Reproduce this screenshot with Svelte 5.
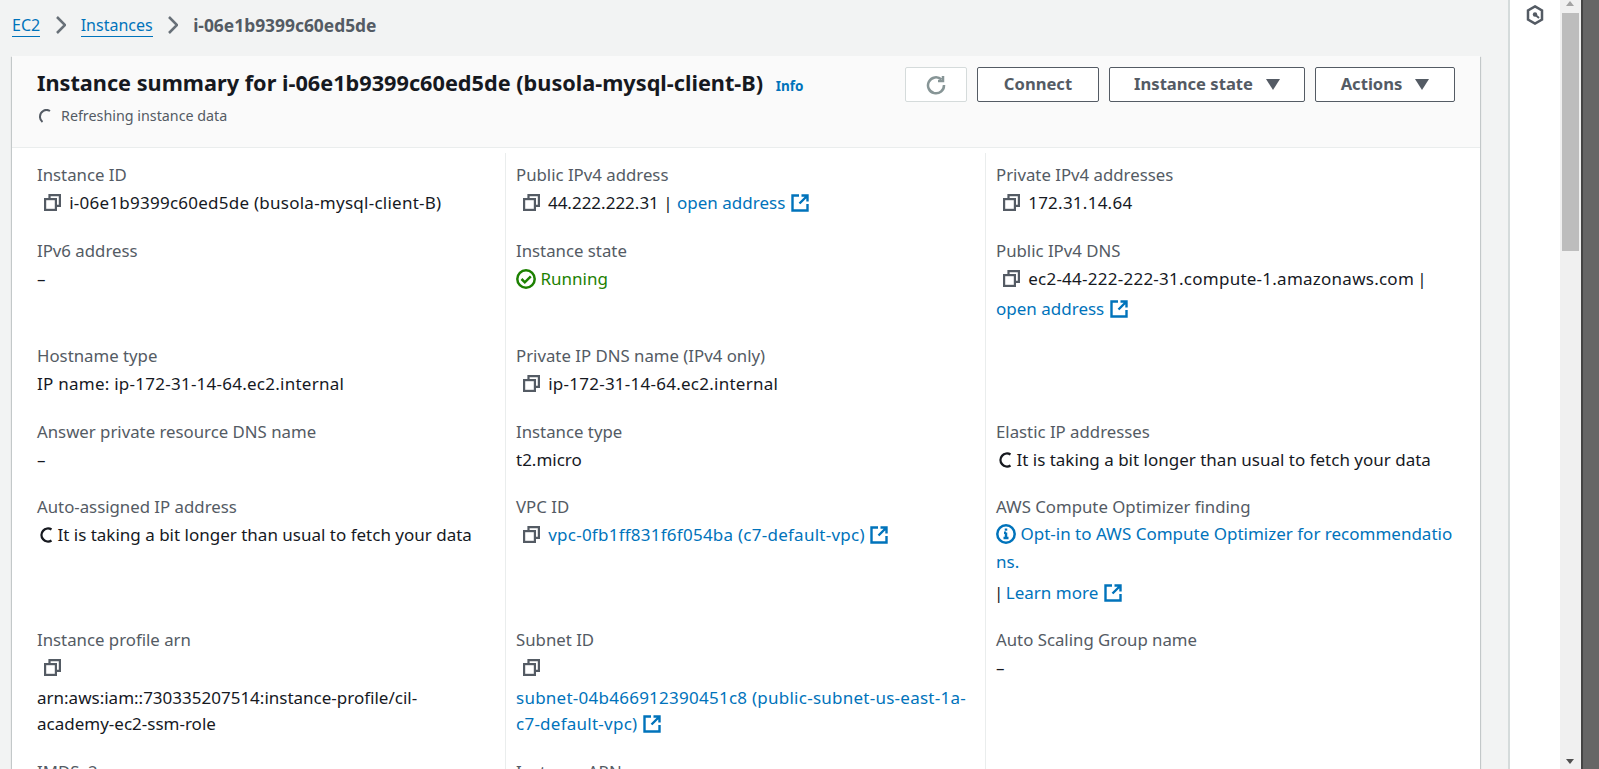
<script>
	const rows = [
		[
			{ label: 'Instance ID', copy: true, text: 'i-06e1b9399c60ed5de (busola-mysql-client-B)' },
			{ label: 'Public IPv4 address', copy: true, plain: true, text: '44.222.222.31 | ', link: 'open address', ext: true },
			{ label: 'Private IPv4 addresses', copy: true, text: '172.31.14.64' }
		],
		[
			{ label: 'IPv6 address', text: '–' },
			{ label: 'Instance state', status: 'Running' },
			{ label: 'Public IPv4 DNS', copy: true, text: 'ec2-44-222-222-31.compute-1.amazonaws.com\u2009| ', link: 'open address', ext: true }
		],
		[
			{ label: 'Hostname type', ids: true, text: 'IP name: ip-172-31-14-64.ec2.internal' },
			{ label: 'Private IP DNS name (IPv4 only)', copy: true, text: 'ip-172-31-14-64.ec2.internal' },
			{ label: '' }
		],
		[
			{ label: 'Answer private resource DNS name', text: '–' },
			{ label: 'Instance type', text: 't2.micro' },
			{ label: 'Elastic IP addresses', spin: true, text: 'It is taking a bit longer than usual to fetch your data' }
		],
		[
			{ label: 'Auto-assigned IP address', spin: true, text: 'It is taking a bit longer than usual to fetch your data' },
			{ label: 'VPC ID', copy: true, link: 'vpc-0fb1ff831f6f054ba (c7-default-vpc)', ext: true },
			{ label: 'AWS Compute Optimizer finding', optimizer: true }
		],
		[
			{ label: 'Instance profile arn', copyBlock: true, text: 'arn:aws:iam::730335207514:instance-profile/cil-academy-ec2-ssm-role' },
			{ label: 'Subnet ID', copyBlock: true, link: 'subnet-04b466912390451c8 (public-subnet-us-east-1a-c7-default-vpc)', ext: true },
			{ label: 'Auto Scaling Group name', text: '–' }
		],
		[
			{ label: 'IMDSv2', text: '' },
			{ label: 'Instance ARN', text: '' },
			{ label: '' }
		]
	];
</script>

{#snippet copyIcon()}
	<svg class="copy" viewBox="0 0 17 17" fill="none" stroke="currentColor" stroke-width="2.2"><rect x="1.100" y="5.100" width="10.800" height="10.800" /><path d="M5.500 5V1.100h10.400v10.800H12" /></svg>
{/snippet}
{#snippet extIcon()}
	<svg class="ext" viewBox="0 0 18 18" fill="none" stroke="currentColor" stroke-width="2.400"><path d="M8 1.500H1.500v15h15V10" /><path d="M8.500 9.500L16 2M10.500 1.500h6v6" /></svg>
{/snippet}
{#snippet spinner()}
	<svg class="spin" viewBox="0 0 14 16" fill="none" stroke="currentColor" stroke-width="2.400"><path d="M12.500 2.500A6.500 6.500 0 1 0 12.500 13.500" /></svg>
{/snippet}

<div class="page">
	<main class="content">
		<nav class="crumbs">
			<a href="#ec2">EC2</a>
			<svg class="chev" viewBox="0 0 10 18" fill="none" stroke="currentColor" stroke-width="2.500"><path d="M1 1l8 8-8 8" /></svg>
			<a href="#instances">Instances</a>
			<svg class="chev" viewBox="0 0 10 18" fill="none" stroke="currentColor" stroke-width="2.500"><path d="M1 1l8 8-8 8" /></svg>
			<span class="here">i-06e1b9399c60ed5de</span>
		</nav>

		<section class="card">
			<header class="head">
				<div class="titles">
					<h1>Instance summary for i-06e1b9399c60ed5de (busola-mysql-client-B) <a class="info" href="#info">Info</a></h1>
					<p class="refresh">
						<svg class="spinner" viewBox="0 0 14 14" fill="none" stroke="currentColor" stroke-width="2"><path d="M11 2A6.500 6.500 0 0 0 1 7.500A6.500 6.500 0 0 0 3.500 13" /></svg>
						Refreshing instance data
					</p>
				</div>
				<div class="actions">
					<button class="btn icon" aria-label="Refresh">
						<svg viewBox="0 0 20 20" fill="none" stroke="currentColor" stroke-width="2.500"><path d="M15.500 4.500A8 8 0 1 0 18 10" /><path d="M12 6h5V1" /></svg>
					</button>
					<button class="btn connect"><span>Connect</span></button>
					<button class="btn state"><span>Instance state</span> <i class="caret"></i></button>
					<button class="btn acts"><span>Actions</span> <i class="caret"></i></button>
				</div>
			</header>

			<div class="grid">
				{#each rows as row}
					{#each row as f}
						<div class="field">
							<div class="label">{f.label}</div>
							{#if f.status}
								<div class="value ok">
									<svg class="round" viewBox="0 0 20 20" fill="none" stroke="currentColor" stroke-width="2.500"><circle cx="10" cy="10" r="8.700" /><path d="M5.500 10l3.300 3.300 6-6" /></svg>
									{f.status}
								</div>
							{:else if f.optimizer}
								<a href="#opt" class="value opt">
									<svg class="round" viewBox="0 0 20 20" fill="none" stroke="currentColor" stroke-width="2.500"><circle cx="10" cy="10" r="8.700" /><path d="M10 8.500v5.500M7.500 14h5M8 8.800h2" /><path d="M10 4.500v2.200" /></svg>
									Opt-in to AWS Compute Optimizer for recommendations.
								</a>
								<div class="value learn">| <a href="#learn">Learn more</a> {@render extIcon()}</div>
							{:else if f.copyBlock}
								<div class="value">{@render copyIcon()}</div>
								<div class="value block" class:ids={f.link}>
									{#if f.link}<a href="#l">{f.link}</a> {@render extIcon()}{:else}{f.text}{/if}
								</div>
							{:else if f.label}
								<div class="value" class:ids={(f.copy && !f.plain) || f.ids}>
									{#if f.copy}{@render copyIcon()}{/if}
									{#if f.spin}{@render spinner()}{/if}
									{f.text ?? ''}{#if f.link}<span class="keep" class:open={f.text}><a href="#l">{f.link}</a> {@render extIcon()}</span>{/if}
								</div>
							{/if}
						</div>
					{/each}
				{/each}
			</div>
		</section>
	</main>

	<aside class="rail">
		<svg class="hex" viewBox="0 0 18 20" fill="none" stroke="currentColor" stroke-width="2.500"><path d="M9 1.400l7 4v9.200l-7 4-7-4V5.400z" /><circle cx="9" cy="9.500" r="2.200" fill="currentColor" stroke="none" /><path d="M9.500 10l3.500 3" stroke-width="2" /></svg>
	</aside>
	<div class="bar">
		<span class="up"></span>
		<span class="thumb"></span>
		<span class="down"></span>
	</div>
	<div class="edge"></div>
</div>

<style>
	:global(body) {
		margin: 0;
		overflow: hidden;
	}

	.page {
		display: flex;
		height: 769px;
		overflow: hidden;
		background: #f2f3f3;
		font-family: 'Noto Sans', sans-serif;
		font-size: 17px;
		color: #16191f;
	}

	a {
		color: #0073bb;
		text-decoration: none;
	}

	.content {
		width: 1510px;
		flex: none;
		box-sizing: border-box;
		padding: 12px 28px 0 12px;
		border-right: 2px solid #d5dbdb;
	}

	.crumbs {
		display: flex;
		align-items: center;
		height: 26px;
		margin-bottom: 18px;
		font-size: 16px;
	}

	.crumbs a {
		border-bottom: 1px solid #0073bb;
		line-height: 22px;
	}

	.chev {
		width: 10px;
		height: 18px;
		margin: 0 15px 0 15.500px;
		color: #687078;
	}

	.here {
		color: #545b64;
		font-size: 17.400px;
		font-weight: 700;
	}

	.card {
		background: #fff;
		box-shadow: 0 1px 1px rgba(0, 28, 36, 0.3), 1px 1px 1px rgba(0, 28, 36, 0.15), -1px 1px 1px rgba(0, 28, 36, 0.15);
	}

	.head {
		display: flex;
		justify-content: space-between;
		box-sizing: border-box;
		height: 92px;
		padding: 11px 25px 0 25px;
		background: #fafafa;
		border-bottom: 1px solid #eaeded;
	}

	h1 {
		margin: 0;
		font-size: 21.700px;
		line-height: 32px;
		font-weight: 700;
		white-space: nowrap;
	}

	.info {
		margin-left: 7px;
		font-size: 13.500px;
		font-weight: 700;
	}

	.refresh {
		display: flex;
		align-items: center;
		gap: 8px;
		margin: 1px 0 0 2px;
		font-size: 14.300px;
		line-height: 26px;
		color: #545b64;
	}

	.spinner {
		width: 14px;
		height: 14px;
		flex: none;
	}

	.actions {
		display: flex;
		gap: 10px;
		flex: none;
	}

	.btn {
		box-sizing: border-box;
		height: 35px;
		display: flex;
		align-items: center;
		justify-content: center;
		padding: 0;
		background: #fff;
		border: 1px solid #545b64;
		border-radius: 2px;
		color: #545b64;
		font: 700 16.600px 'Noto Sans', sans-serif;
	}

	.btn span {
		margin-top: -2px;
	}

	.icon {
		width: 62px;
		border-color: #d5dbdb;
		color: #879596;
	}

	.icon svg {
		width: 20px;
		height: 20px;
	}

	.connect {
		width: 122px;
	}

	.state {
		width: 196px;
	}

	.acts {
		width: 140px;
	}

	.caret {
		width: 0;
		height: 0;
		margin-left: 13px;
		border-left: 7px solid transparent;
		border-right: 7px solid transparent;
		border-top: 11px solid #545b64;
	}

	.grid {
		display: grid;
		grid-template-columns: 494px 480px 1fr;
		margin-top: 5px;
	}

	.field {
		box-sizing: border-box;
		min-width: 0;
		padding: 8px 16px 9px 10px;
		border-right: 1px solid #eaeded;
	}

	.field:nth-child(3n + 1) {
		padding-left: 25px;
	}

	.field:nth-child(3n) {
		border-right: 0;
		padding-right: 26px;
	}

	.label {
		color: #545b64;
		font-size: 16.800px;
		line-height: 27.500px;
	}

	.value {
		display: block;
		line-height: 30px;
		margin-top: -0.500px;
		margin-bottom: 1.500px;
	}

	.ids {
		letter-spacing: 0.250px;
	}

	.open {
		letter-spacing: 0;
	}

	.block {
		line-height: 26.500px;
		margin-top: 0;
		margin-bottom: 3px;
	}

	.opt {
		line-height: 27.500px;
		margin-bottom: 0;
		word-break: break-all;
	}

	.learn {
		margin-top: 3px;
		margin-bottom: 1px;
		margin-left: -2px;
	}

	.learn a {
		margin-left: -2px;
	}

	.keep {
		white-space: nowrap;
	}

	.copy {
		width: 17px;
		height: 17px;
		margin: 0 3.500px 0 7px;
		vertical-align: -2px;
		color: #545b64;
	}

	.ext {
		width: 18px;
		height: 18px;
		margin-left: 1px;
		vertical-align: -3px;
		color: #0073bb;
	}

	.spin {
		width: 14px;
		height: 16px;
		margin-left: 2px;
		vertical-align: -2px;
	}

	.ok {
		color: #1d8102;
	}

	.round {
		width: 20px;
		height: 20px;
		vertical-align: -4px;
	}

	.rail {
		width: 50px;
		flex: none;
		background: #fff;
		display: flex;
		justify-content: center;
		align-items: flex-start;
	}

	.hex {
		width: 18px;
		height: 20px;
		margin-top: 5px;
		color: #545b64;
	}

	.bar {
		width: 21px;
		flex: none;
		background: #f0f0f0;
		position: relative;
	}

	.up, .down {
		position: absolute;
		left: 6px;
		border-left: 4.500px solid transparent;
		border-right: 4.500px solid transparent;
	}

	.up {
		top: 1px;
		border-bottom: 5px solid #a3a3a3;
	}

	.down {
		bottom: 5px;
		border-top: 5px solid #505050;
	}

	.thumb {
		position: absolute;
		left: 2px;
		right: 2px;
		top: 13px;
		height: 238px;
		background: #bdbdbd;
	}

	.edge {
		flex: 1;
		background: #666;
		border-left: 2px solid #444;
	}
</style>
